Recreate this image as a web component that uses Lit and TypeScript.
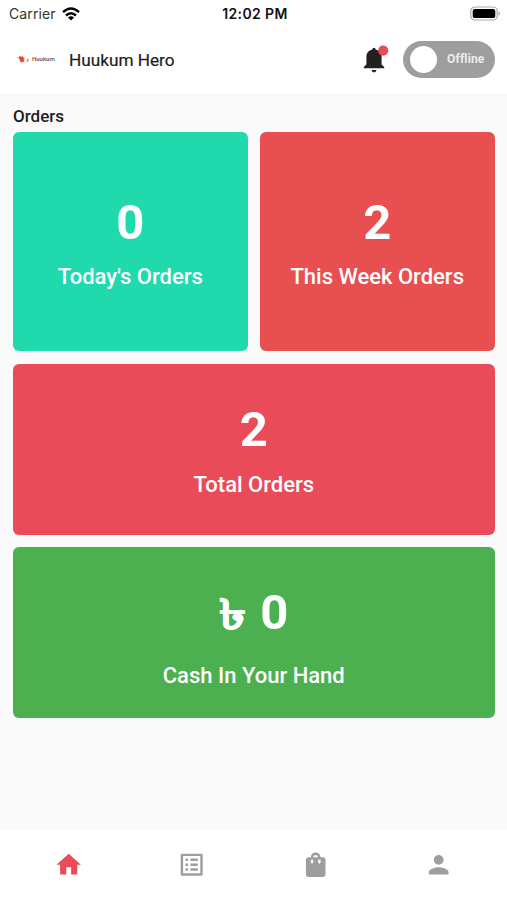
import { LitElement, html, css, svg, nothing } from "lit";
import { customElement, property } from "lit/decorators.js";

const ICONS = {
  home: svg`<path d="M10 20v-6h4v6h5v-8h3L12 3 2 12h3v8z"/>`,
  list: svg`<path d="M19 5v14H5V5h14m1.1-2H3.9c-.5 0-.9.4-.9.9v16.2c0 .4.4.9.9.9h16.2c.4 0 .9-.5.9-.9V3.9c0-.5-.5-.9-.9-.9zM11 7h6v2h-6V7zm0 4h6v2h-6v-2zm0 4h6v2h-6zM7 7h2v2H7zm0 4h2v2H7zm0 4h2v2H7z"/>`,
  bag: svg`<path d="M18 6h-2c0-2.21-1.79-4-4-4S8 3.79 8 6H6c-1.1 0-2 .9-2 2v12c0 1.1.9 2 2 2h12c1.1 0 2-.9 2-2V8c0-1.1-.9-2-2-2zm-8 4c0 .55-.45 1-1 1s-1-.45-1-1V8h2v2zm2-6c1.1 0 2 .9 2 2h-4c0-1.1.9-2 2-2zm4 6c0 .55-.45 1-1 1s-1-.45-1-1V8h2v2z"/>`,
  person: svg`<path d="M12 12c2.21 0 4-1.79 4-4s-1.79-4-4-4-4 1.79-4 4 1.79 4 4 4zm0 2c-2.67 0-8 1.34-8 4v2h16v-2c0-2.66-5.33-4-8-4z"/>`,
};

@customElement("stat-card")
class StatCard extends LitElement {
  @property() value = "";
  @property() label = "";
  @property() currency = "";
  static styles = css`
    :host {
      display: flex;
      flex-direction: column;
      align-items: center;
      justify-content: center;
      gap: 13px;
      padding-top: 1px;
      box-sizing: border-box;
      border-radius: 6px;
      color: #fff;
    }
    .value {
      font-size: 49px;
      font-weight: 700;
      line-height: var(--value-line, 57.4px);
      white-space: pre;
    }
    .currency {
      display: inline-block;
      font-size: 42px;
      line-height: 1;
      margin: 0 5px 0 3px;
      transform: scaleX(1.3);
      -webkit-text-stroke: 0.6px #fff;
    }
    .label {
      font-size: 22px;
      font-weight: 500;
      line-height: 26px;
      white-space: nowrap;
    }
  `;
  render() {
    return html`<div class="value">${this.currency
        ? html`<span class="currency">${this.currency}</span> `
        : nothing}${this.value}</div>
      <div class="label">${this.label}</div>`;
  }
}

@customElement("app-root")
class AppRoot extends LitElement {
  static styles = css`
    :host {
      display: flex;
      flex-direction: column;
      height: 900px;
      background: #fafafa;
      color: #212121;
      font-family: Roboto, "Noto Sans", sans-serif;
    }
    svg { display: block; }
    .status {
      display: grid;
      grid-template-columns: 1fr auto 1fr;
      align-items: center;
      height: 27px;
      padding: 0 6px 0 9px;
      background: #fff;
      color: #111;
      font-family: Inter, sans-serif;
      font-size: 14px;
      line-height: 27px;
    }
    .carrier { display: flex; align-items: center; gap: 6px; letter-spacing: 0.1px; color: #333; }
    .time { font-weight: 600; letter-spacing: 0.4px; }
    .battery { justify-self: end; }
    .header {
      display: flex;
      align-items: center;
      height: 66px;
      padding: 0 12.5px 1.5px 17px;
      background: #fff;
      box-sizing: border-box;
    }
    .logo {
      display: flex;
      align-items: center;
      width: 38px;
      margin-right: 14px;
      padding-bottom: 1.5px;
      font-size: 6px;
      font-weight: 500;
      color: #694b49;
      gap: 1px;
    }
    .title { flex: 1; padding-top: 1.5px; font-size: 17.2px; font-weight: 400; -webkit-text-stroke: 0.2px #212121; }
    .bell { margin: 2px 13.5px 0 0; }
    .toggle {
      display: flex;
      align-items: center;
      justify-content: space-between;
      box-sizing: border-box;
      width: 92px;
      height: 37px;
      padding: 0 10px 0 7px;
      border-radius: 19px;
      background: #9e9e9e;
      color: #ececec;
      font-size: 12px;
      font-weight: 700;
      letter-spacing: 0.15px;
    }
    .knob { width: 27px; height: 27px; border-radius: 50%; background: #fff; }
    .main { flex: 1; padding: 12px 12.5px 0 13px; }
    .heading { margin: 0; font-size: 17px; font-weight: 500; line-height: 22px; padding-bottom: 4.8px; }
    .cards {
      display: grid;
      grid-template-columns: 1fr 1fr;
      grid-template-rows: 219.6px 171px 171px;
      gap: 12.3px;
    }
    .wide { grid-column: span 2; }
    .teal { background: #20d9ad; }
    .coral { background: #e84f50; }
    .rose { background: #e94b59; }
    .green { background: #4caf50; --value-line: 74px; }
    .nav {
      display: flex;
      align-items: center;
      height: 70.5px;
      padding: 0 6.5px;
      background: #fff;
      color: #9e9e9e;
    }
    .tab { flex: 1; display: flex; justify-content: center; }
    .active { color: #e94b59; }
  `;

  private tab(icon: unknown, active = false) {
    return html`<div class=${active ? "tab active" : "tab"}>
      <svg width="29.4" height="29.4" viewBox="0 0 24 24" fill="currentColor">${icon}</svg>
    </div>`;
  }

  render() {
    return html`
      <div class="status">
        <div class="carrier">
          <span>Carrier</span>
          <svg width="18" height="14" viewBox="0 0 18 14" fill="none" stroke="#000" stroke-width="2.4">
            <path d="M1 5.2Q9-2.2 17 5.2"/>
            <path d="M4 8.5Q9 4 14 8.5"/>
            <path d="M9 13.6L5.9 10.5Q9 8 12.1 10.5z" fill="#000" stroke="none"/>
          </svg>
        </div>
        <span class="time">12:02 PM</span>
        <svg class="battery" width="31" height="15" viewBox="0 0 31 15">
          <rect x=".8" y="1" width="26.4" height="13" rx="4" fill="#fff" stroke="#aaa" stroke-width="1.2"/>
          <rect x="2.7" y="2.9" width="22.6" height="9.2" rx="2.2" fill="#000"/>
          <path d="M28.6 5.3q2.4 2.2 0 4.4z" fill="#999"/>
        </svg>
      </div>
      <div class="header">
        <div class="logo">
          <svg width="14" height="9" viewBox="0 0 14 9">
            <path d="M0 3.5l2 .6M2.5 2l1.5 1.2 1.5-1 .4 1.6 1.6.3-1 1.7.8 1.5-2.5.8-1.8-.8.3-1.6L2 4.6z" fill="#e5482f" stroke="#e5482f" stroke-width=".5"/>
            <path d="M10 3.2l.8 1.7 2.2 1.1-1.7.5-.5 1.6-1.4-.7.8-1.6z" fill="#ec7a65"/>
          </svg>
          <span>Huukum</span>
        </div>
        <div class="title">Huukum Hero</div>
        <svg class="bell" width="26" height="30" viewBox="0 0 26 30">
          <path d="M11 2.8c.9 0 1.6.8 1.6 1.8 3.9.8 6 3.7 6 7.4v7.6l2.6 2.4v1.2H.8v-1.2l2.6-2.4V12c0-3.7 2.1-6.6 6-7.4 0-1 .7-1.8 1.6-1.8zM8.6 25h4.8c-.3 1.5-1.2 2.3-2.4 2.3S8.9 26.5 8.6 25z" fill="#212121"/>
          <circle cx="20.2" cy="5.6" r="5.1" fill="#e84d56"/>
        </svg>
        <div class="toggle"><div class="knob"></div><span>Offline</span></div>
      </div>
      <div class="main">
        <h2 class="heading">Orders</h2>
        <div class="cards">
          <stat-card class="teal" value="0" label="Today's Orders"></stat-card>
          <stat-card class="coral" value="2" label="This Week Orders"></stat-card>
          <stat-card class="wide rose" value="2" label="Total Orders"></stat-card>
          <stat-card class="wide green" currency="৳" value="0" label="Cash In Your Hand"></stat-card>
        </div>
      </div>
      <div class="nav">
        ${this.tab(ICONS.home, true)}${this.tab(ICONS.list)}${this.tab(ICONS.bag)}${this.tab(ICONS.person)}
      </div>
    `;
  }
}
